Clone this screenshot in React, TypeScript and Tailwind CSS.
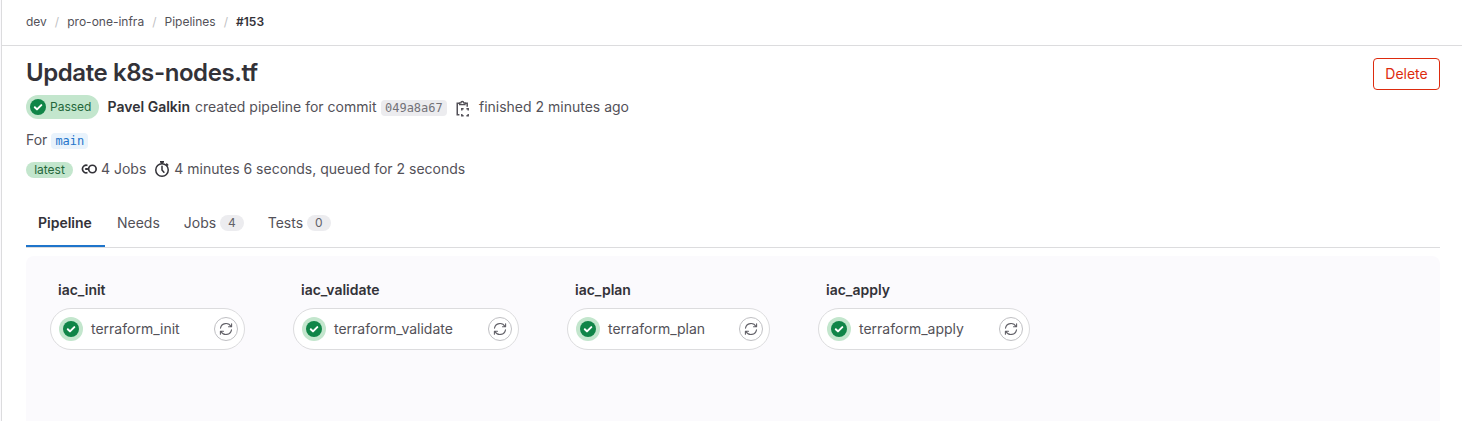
import type { ReactNode } from "react";

type Job = { stage: string; name: string; width: string };

const jobs: Job[] = [
  { stage: "iac_init", name: "terraform_init", width: "w-[195px]" },
  { stage: "iac_validate", name: "terraform_validate", width: "w-[226px]" },
  { stage: "iac_plan", name: "terraform_plan", width: "w-[203px]" },
  { stage: "iac_apply", name: "terraform_apply", width: "w-[212px]" },
];

function CheckIcon() {
  return (
    <svg className="size-4 shrink-0" viewBox="0 0 16 16" fill="none">
      <circle cx="8" cy="8" r="8" fill="#108548" />
      <path d="M4.8 8.2 7 10.4l4.3-4.3" stroke="#fff" strokeWidth="2" strokeLinecap="round" strokeLinejoin="round" />
    </svg>
  );
}

function RetryIcon() {
  return (
    <svg className="size-3.5 shrink-0" viewBox="0 0 14 14" fill="none" stroke="#626168" strokeWidth="1.1" strokeLinecap="round" strokeLinejoin="round">
      <path d="M1.5 6.2A5.6 5.6 0 0 1 12 4.6M12.6 1.7v3.1H9.5" />
      <path d="M12.5 7.8A5.6 5.6 0 0 1 2 9.4M1.4 12.3V9.2h3.1" />
    </svg>
  );
}

function ClipboardIcon() {
  return (
    <svg className="h-[17px] w-4" viewBox="0 0 16 17" fill="none" stroke="#535158" strokeWidth="1.5">
      <path d="M4.4 14.7H2.25V3.2H4.5M10 3.2h2.2v3.6" />
      <path d="M4.6 4.6V2.9h1.3a1.4 1.4 0 0 1 2.8 0H10v1.7z" strokeWidth="1.3" />
      <path d="M6.8 10.6V8.8h1.8M11.4 8.8h1.8v1.8M13.2 13.9v1.8h-1.8M8.6 15.7H6.8v-1.8" />
    </svg>
  );
}

function PipelineIcon() {
  return (
    <svg className="size-4" viewBox="0 0 16 16" fill="none" stroke="#333238" strokeWidth="1.7">
      <circle cx="11.4" cy="8" r="3.75" />
      <path d="M6.5 4.5A3.75 3.75 0 1 0 6.5 11.5" />
      <path d="M5 8h1.2" strokeWidth="2.2" strokeLinecap="round" />
    </svg>
  );
}

function TimerIcon() {
  return (
    <svg className="size-4" viewBox="0 0 16 16" fill="none" stroke="#333238" strokeWidth="1.5">
      <circle cx="8" cy="9" r="6.25" />
      <path d="M8 5.3V9l1.9 2.3" strokeLinecap="round" strokeLinejoin="round" />
      <path d="M6 .9h4M8 1v2M12.2 2.6l1.9 1.9" strokeWidth="1.7" />
    </svg>
  );
}

function Tab({ label, count, active }: { label: string; count?: string; active?: boolean }) {
  return (
    <div className={active ? "flex h-[40px] w-[79px] border-b-2 border-[#1f75cb] px-3 pt-1.5 font-semibold text-[#333238]" : "flex h-[40px] px-3 pt-1.5"}>
      <span className="leading-5">{label}</span>
      {count && (
        <span className="mt-0.5 ml-1 flex h-4 w-[23.5px] items-center justify-center rounded-full bg-[#ececef] text-xs text-[#626168]">{count}</span>
      )}
    </div>
  );
}

function Mono({ className, children }: { className: string; children: ReactNode }) {
  return (
    <code className={`flex h-4 items-center rounded px-1 font-['DejaVu_Sans_Mono',monospace] text-xs leading-4 ${className}`}>{children}</code>
  );
}

export default function App() {
  return (
    <div className="h-[421px] overflow-hidden bg-[#fbfafd] pl-px font-['Inter',sans-serif] text-sm text-[#535158]">
      <div className="h-full border-l border-[#dcdcde] bg-white">
        <nav className="flex h-[46px] items-center gap-2 border-b border-[#dcdcde] pb-0.5 pl-6 text-xs">
          <span>dev</span>
          <span className="w-[4.4px] text-[#bfbfc3]">/</span>
          <span>pro-one-infra</span>
          <span className="w-[4.4px] text-[#bfbfc3]">/</span>
          <span>Pipelines</span>
          <span className="w-[4.4px] text-[#bfbfc3]">/</span>
          <span className="font-semibold text-[#333238]">#153</span>
        </nav>
        <main className="px-6 pr-[22px]">
          <header className="flex h-[49px] justify-between pt-3">
            <h1 className="-mt-px text-2xl leading-8 font-semibold tracking-[-0.42px] text-[#333238]">Update k8s-nodes.tf</h1>
            <button className="h-8 w-[67px] rounded border border-[#dd2b0e] text-[#dd2b0e]">Delete</button>
          </header>
          <div className="flex h-6 items-center">
            <span className="flex h-6 w-[73px] items-center gap-1 rounded-full bg-[#c3e6cd] pl-1 text-xs text-[#24663b]">
              <CheckIcon />
              Passed
            </span>
            <b className="ml-[8.5px] font-semibold text-[#333238]">Pavel Galkin</b>
            <span className="ml-[5px]">created pipeline for commit</span>
            <Mono className="ml-[4.5px] mt-0.5 w-[66px] bg-[#ececef] text-[#737278]">049a8a67</Mono>
            <span className="mt-[3px] ml-2"><ClipboardIcon /></span>
            <span className="ml-2">finished 2 minutes ago</span>
          </div>
          <div className="mt-[9px] flex h-6 items-center">
            For
            <Mono className="mt-0.5 ml-1 bg-[#e9f3fc] text-[#1f75cb]">main</Mono>
          </div>
          <div className="mt-[5px] flex h-6 items-center">
            <span className="mt-px flex h-4 w-[47px] items-center justify-center rounded-full bg-[#c3e6cd] text-xs leading-4 text-[#24663b]">latest</span>
            <span className="ml-2"><PipelineIcon /></span>
            <span className="ml-1">4 Jobs</span>
            <span className="ml-2"><TimerIcon /></span>
            <span className="ml-1">4 minutes 6 seconds, queued for 2 seconds</span>
          </div>
          <div className="mt-[26px] flex border-b border-[#dcdcde]">
            <Tab label="Pipeline" active />
            <Tab label="Needs" />
            <Tab label="Jobs" count="4" />
            <Tab label="Tests" count="0" />
          </div>
          <section className="mt-2 flex h-[200px] gap-12 rounded-lg bg-[#fbfafd] px-6 pt-6">
            {jobs.map((job) => (
              <div key={job.name} className={job.width}>
                <div className="pl-2 leading-5 font-semibold text-[#333238]">{job.stage}</div>
                <div className="mt-2 flex h-[42px] items-center rounded-full border border-[#dcdcde] bg-white pr-1.5 pl-2">
                  <span className="flex size-6 items-center justify-center rounded-full bg-[#c3e6cd]"><CheckIcon /></span>
                  <span className="ml-2">{job.name}</span>
                  <span className="ml-auto flex size-6 items-center justify-center rounded-full border border-[#bfbfc3]"><RetryIcon /></span>
                </div>
              </div>
            ))}
          </section>
        </main>
      </div>
    </div>
  );
}
